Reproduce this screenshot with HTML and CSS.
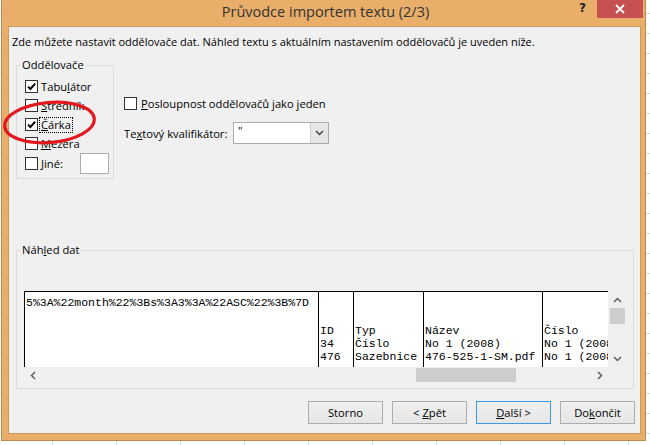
FILE: index.html
```html
<!DOCTYPE html>
<html lang="cs">
<head>
<meta charset="utf-8">
<title>Průvodce importem textu</title>
<link rel="stylesheet" href="styles.css">
</head>
<body>
<div class="window">
  <div class="titlebar">
    <div class="spacer"></div>
    <div class="title">Průvodce importem textu (2/3)</div>
    <div class="controls">
      <span class="help">?</span>
      <span class="close"><svg width="10" height="10" viewBox="0 0 10 10"><path d="M1 1 L9 9 M9 1 L1 9" stroke="#fff" stroke-width="1.8" fill="none"/></svg></span>
    </div>
  </div>
  <div class="client">
    <p class="intro">Zde můžete nastavit oddělovače dat. Náhled textu s aktuálním nastavením oddělovačů je uveden níže.</p>
    <div class="options">
      <fieldset class="group seps">
        <legend>Oddělovače</legend>
        <div class="check"><span class="box"><svg viewBox="0 0 11 11"><path d="M2 5.6 L4.4 8 L9.2 2.6" stroke="#000" stroke-width="1.9" fill="none"/></svg></span><span>Tabu<u>l</u>átor</span></div>
        <div class="check"><span class="box"></span><span><u>S</u>tředník</span></div>
        <div class="check"><span class="box"><svg viewBox="0 0 11 11"><path d="M2 5.6 L4.4 8 L9.2 2.6" stroke="#000" stroke-width="1.9" fill="none"/></svg></span><span class="focus"><u>Č</u>árka</span></div>
        <div class="check"><span class="box"></span><span><u>M</u>ezera</span></div>
        <div class="check other"><span class="box"></span><span class="olabel"><u>J</u>iné:</span><span class="textbox"></span></div>
      </fieldset>
      <div class="rightcol">
        <div class="check wide"><span class="box"></span><span><u>P</u>osloupnost oddělovačů jako jeden</span></div>
        <div class="qual">
          <span class="qlabel">Te<u>x</u>tový kvalifikátor:</span>
          <div class="combo">
            <span class="cval">"</span>
            <span class="cbtn"><svg width="9" height="6" viewBox="0 0 9 6"><path d="M1 1 L4.5 4.5 L8 1" stroke="#444" stroke-width="1.5" fill="none"/></svg></span>
          </div>
        </div>
      </div>
    </div>
    <fieldset class="group preview">
      <legend>Náh<u>l</u>ed dat</legend>
      <div class="scroller">
        <div class="sheet">
          <div class="col c1">
            <div class="ln">5%3A%22month%22%3Bs%3A3%3A%22ASC%22%3B%7D</div>
          </div>
          <div class="col c2">
            <div class="ln"></div><div class="ln sp"></div>
            <div class="ln">ID</div><div class="ln">34</div><div class="ln">476</div>
          </div>
          <div class="col c3">
            <div class="ln"></div><div class="ln sp"></div>
            <div class="ln">Typ</div><div class="ln">Číslo</div><div class="ln">Sazebnice</div>
          </div>
          <div class="col c4">
            <div class="ln"></div><div class="ln sp"></div>
            <div class="ln">Název</div><div class="ln">No 1 (2008)</div><div class="ln">476-525-1-SM.pdf</div>
          </div>
          <div class="col c5">
            <div class="ln"></div><div class="ln sp"></div>
            <div class="ln">Číslo</div><div class="ln">No 1 (2008</div><div class="ln">No 1 (2008</div>
          </div>
        </div>
        <div class="vbar">
          <span class="arrow"><svg width="9" height="6" viewBox="0 0 9 6"><path d="M1 5 L4.5 1.5 L8 5" stroke="#606060" stroke-width="1.5" fill="none"/></svg></span>
          <span class="vthumb"></span>
          <span class="vtrack"></span>
          <span class="arrow"><svg width="9" height="6" viewBox="0 0 9 6"><path d="M1 1 L4.5 4.5 L8 1" stroke="#606060" stroke-width="1.5" fill="none"/></svg></span>
        </div>
        <div class="hbar">
          <span class="arrow"><svg width="6" height="9" viewBox="0 0 6 9"><path d="M5 1 L1.5 4.5 L5 8" stroke="#606060" stroke-width="1.5" fill="none"/></svg></span>
          <span class="htrack"></span>
          <span class="hthumb"></span>
          <span class="htrack2"></span>
          <span class="arrow"><svg width="6" height="9" viewBox="0 0 6 9"><path d="M1 1 L4.5 4.5 L1 8" stroke="#606060" stroke-width="1.5" fill="none"/></svg></span>
        </div>
        <div class="corner"></div>
      </div>
    </fieldset>
    <div class="buttons">
      <button class="btn">Storno</button>
      <button class="btn">&lt; <u>Z</u>pět</button>
      <button class="btn default"><u>D</u>alší &gt;</button>
      <button class="btn">Do<u>k</u>ončit</button>
    </div>
    <svg class="mark" width="100" height="56" viewBox="0 0 100 56"><ellipse cx="49.5" cy="27.5" rx="45" ry="20" transform="rotate(-5 49.5 27.5)" stroke="#E3171E" stroke-width="3.2" fill="none"/></svg>
  </div>
</div>
</body>
</html>
```

FILE: styles.css
```css
html, body {
  margin: 0;
  padding: 0;
}

body {
  width: 650px;
  height: 445px;
  overflow: hidden;
  background-color: #ffffff;
  background-image:
    repeating-linear-gradient(90deg, transparent 0 52px, #d6d6d6 52px 53px, transparent 53px 64px),
    repeating-linear-gradient(180deg, transparent 0 13px, #d6d6d6 13px 14px, transparent 14px 20px);
  font-family: "Open Sans", "Noto Sans", sans-serif;
  font-size: 11.2px;
  color: #000;
}

.window {
  margin-left: 1px;
  width: 645px;
  height: 441px;
  box-sizing: border-box;
  background: #E9AE69;
  border: 1px solid #B98C57;
  border-top: 0;
  padding: 0 4px 6px 6px;
  display: flex;
  flex-direction: column;
}

.titlebar {
  height: 26px;
  margin: 0 -4px 0 -6px;
  display: grid;
  grid-template-columns: 1fr auto 1fr;
  flex: none;
}

.title {
  font-size: 14.5px;
  line-height: 24px;
  color: #333;
  padding-left: 4px;
  white-space: nowrap;
}

.controls {
  display: flex;
  justify-content: flex-end;
  align-items: flex-start;
}

.help {
  font-family: "DejaVu Sans", sans-serif;
  font-weight: bold;
  font-size: 12px;
  line-height: 14px;
  color: #222;
  margin-right: 11px;
  margin-top: 1px;
}

.close {
  width: 46px;
  height: 18px;
  background: #C75050;
  margin-right: 2px;
  display: flex;
  align-items: center;
  justify-content: center;
}

.client {
  flex: 1;
  position: relative;
  background: #F0F0F0;
  border: 1px solid #C99A5F;
}

.intro {
  margin: 7px 0 0 3px;
  font-size: 11px;
  line-height: 15px;
  white-space: nowrap;
}

.options {
  display: flex;
  align-items: flex-start;
  margin-top: 8px;
}

.group {
  margin: 0;
  border: 1px solid #DCDCDC;
  min-width: 0;
  box-sizing: border-box;
}

.group legend {
  padding: 0 2px;
  line-height: 16px;
}

.seps {
  margin-left: 7px;
  width: 98px;
  padding: 4px 0 4px 5px;
}

.seps legend {
  margin-left: -2px;
}

.check {
  display: flex;
  align-items: center;
  height: 19px;
  margin-left: 3px;
  gap: 3px;
  white-space: nowrap;
}

.check.other {
  height: 21px;
}

.box {
  width: 13px;
  height: 13px;
  box-sizing: border-box;
  border: 1px solid #333;
  background: #fff;
  flex: none;
  display: flex;
}

.box svg {
  width: 11px;
  height: 11px;
}

.focus {
  outline: 1px dotted #000;
  outline-offset: 0;
  padding: 0 1px;
  margin-left: -1px;
  line-height: 14px;
}

.olabel {
  width: 36px;
}

.textbox {
  width: 29px;
  height: 21px;
  box-sizing: border-box;
  border: 1px solid #ABADB3;
  background: #fff;
}

.rightcol {
  margin-left: 10px;
  margin-top: 37px;
}

.check.wide {
  margin-left: 0;
  gap: 4px;
}

.qual {
  display: flex;
  align-items: center;
  margin-top: 9px;
}

.qlabel {
  width: 109px;
  white-space: nowrap;
}

.combo {
  width: 96px;
  height: 22px;
  box-sizing: border-box;
  border: 1px solid #ACACAC;
  background: #fff;
  display: flex;
}

.cval {
  flex: 1;
  padding-left: 4px;
  line-height: 16px;
}

.cbtn {
  width: 17px;
  background: #E6E6E6;
  border-left: 1px solid #D0D0D0;
  display: flex;
  align-items: center;
  justify-content: center;
}

.preview {
  margin-left: 7px;
  margin-top: 63px;
  width: 618px;
  padding: 33px 0 4px 7px;
}

.preview legend {
  margin-left: -4px;
}

.scroller {
  display: grid;
  grid-template-columns: 584px 19px;
  grid-template-rows: 76px 17px;
}

.sheet {
  display: flex;
  background: #fff;
  border-top: 1px solid #000;
  overflow: hidden;
  font-family: "Liberation Mono", "DejaVu Sans Mono", monospace;
  font-size: 11.5px;
  color: #000;
}

.col {
  border-left: 1px solid #000;
  padding: 4px 0 0 1px;
  box-sizing: border-box;
  flex: none;
  overflow: hidden;
  white-space: nowrap;
}

.c1 { width: 294px; }
.c2 { width: 35px; }
.c3 { width: 70px; }
.c4 { width: 119px; }
.c5 { flex: 1; }

.ln {
  height: 13px;
  line-height: 13px;
}

.ln.sp {
  height: 15px;
}

.vbar {
  display: flex;
  flex-direction: column;
  align-items: center;
}

.vbar .arrow {
  height: 17px;
  display: flex;
  align-items: center;
  justify-content: center;
  flex: none;
}

.vthumb {
  width: 15px;
  height: 16px;
  background: #CDCDCD;
  flex: none;
}

.vtrack { flex: 1; }

.hbar {
  display: flex;
  align-items: center;
}

.hbar .arrow {
  width: 17px;
  height: 17px;
  display: flex;
  align-items: center;
  justify-content: center;
  flex: none;
}

.htrack { width: 375px; flex: none; }
.hthumb { width: 100px; height: 14px; background: #CDCDCD; flex: none; margin-top: -1px; }
.htrack2 { flex: 1; }

.buttons {
  display: flex;
  justify-content: flex-end;
  gap: 9px;
  margin-top: 12px;
  padding-right: 5px;
}

.btn {
  width: 75px;
  height: 23px;
  box-sizing: border-box;
  border: 1px solid #ACACAC;
  background: linear-gradient(#F0F0F0, #E5E5E5);
  font-family: "Open Sans", "Noto Sans", sans-serif;
  font-size: 11.2px;
  color: #000;
  padding: 0;
  margin: 0;
}

.btn.default {
  border-color: #3C9AE6;
}

.mark {
  position: absolute;
  left: -9px;
  top: 68px;
  overflow: visible;
}
```
